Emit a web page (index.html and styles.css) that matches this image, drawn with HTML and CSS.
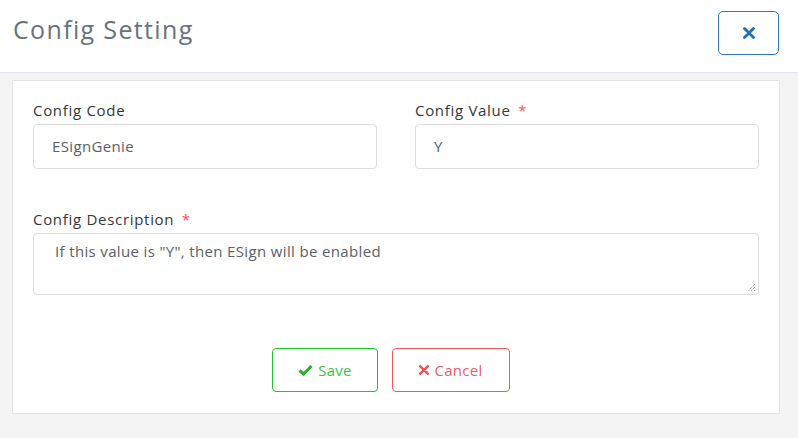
FILE: index.html
```html
<!DOCTYPE html>
<html>
<head>
<meta charset="utf-8">
<link rel="stylesheet" href="styles.css">
</head>
<body>
<div class="modal">
  <header class="modal-header">
    <h1 class="title">Config Setting</h1>
    <button class="close-btn" type="button" aria-label="Close">
      <svg width="12" height="12" viewBox="0 0 12 12"><path d="M1.5 1.5 L10.5 10.5 M10.5 1.5 L1.5 10.5" stroke="#1d6fb0" stroke-width="2.8" stroke-linecap="round" fill="none"/></svg>
    </button>
  </header>
  <div class="modal-body">
    <div class="card">
      <div class="row two">
        <div class="field">
          <label class="label">Config Code</label>
          <div class="input">ESignGenie</div>
        </div>
        <div class="field">
          <label class="label">Config Value <span class="req">*</span></label>
          <div class="input">Y</div>
        </div>
      </div>
      <div class="row">
        <div class="field">
          <label class="label">Config Description <span class="req">*</span></label>
          <div class="textarea">If this value is "Y", then ESign will be enabled
            <svg class="grip" width="10" height="10" viewBox="0 0 10 10"><path d="M9 2 L2 9 M9 5 L5 9 M9 8 L8 9" stroke="#777" stroke-width="1" fill="none" stroke-dasharray="1 1"/></svg>
          </div>
        </div>
      </div>
      <div class="actions">
        <button class="btn save" type="button">
          <svg width="15" height="12" viewBox="0 0 15 12"><path d="M1.5 6.5 L5.5 10 L13.5 2" stroke="#22b52c" stroke-width="3" fill="none" stroke-linejoin="miter"/></svg>
          Save
        </button>
        <button class="btn cancel" type="button">
          <svg width="10" height="10" viewBox="0 0 10 10"><path d="M1.3 1.3 L8.7 8.7 M8.7 1.3 L1.3 8.7" stroke="#ef5555" stroke-width="2.6" stroke-linecap="round" fill="none"/></svg>
          Cancel
        </button>
      </div>
    </div>
  </div>
</div>
</body>
</html>
```

FILE: styles.css
```css
* { box-sizing: border-box; }
html, body { margin: 0; padding: 0; }
body {
  width: 798px;
  height: 438px;
  overflow: hidden;
  background: #f4f4f4;
  font-family: "Open Sans", "Liberation Sans", sans-serif;
}
.modal { display: flex; flex-direction: column; height: 438px; }
.modal-header {
  height: 73px;
  background: #fff;
  border-bottom: 1px solid #dfe4ea;
  display: flex;
  align-items: flex-start;
  justify-content: space-between;
  padding: 11px 19px 0 13px;
}
.title {
  margin: 0;
  padding-top: 1px;
  font-size: 25px;
  font-weight: 400;
  color: #667380;
  letter-spacing: 1.35px;
}
.close-btn {
  width: 61px;
  height: 44px;
  border: 1px solid #2b7bbd;
  border-radius: 5px;
  background: #fff;
  display: flex;
  align-items: center;
  justify-content: center;
  padding: 0;
}
.modal-body { padding: 7px 18px 0 12px; }
.card {
  background: #fff;
  border: 1px solid #e3e3e3;
  height: 334px;
  padding: 19px 20px 0 20px;
  display: flex;
  flex-direction: column;
}
.row { display: flex; }
.row.two { gap: 38px; }
.row.two .field { width: 344px; }
.row + .row { margin-top: 40px; }
.field { display: flex; flex-direction: column; flex: 1; }
.label {
  font-size: 15px;
  letter-spacing: 0.7px;
  color: #34383c;
  line-height: 20px;
  margin-bottom: 4px;
}
.req { color: #f0575a; margin-left: 3px; }
.input {
  height: 45px;
  border: 1px solid #dcdde2;
  border-radius: 4px;
  padding: 0 18px;
  display: flex;
  align-items: center;
  font-size: 15px;
  letter-spacing: 0.35px;
  color: #5a6168;
  padding-bottom: 2px;
}
.textarea {
  position: relative;
  height: 62px;
  border: 1px solid #dcdcdc;
  border-radius: 4px;
  padding: 7px 21px;
  font-size: 15px;
  letter-spacing: 0.35px;
  color: #5a6168;
  line-height: 20px;
}
.grip { position: absolute; right: 2px; bottom: 2px; }
.actions {
  display: flex;
  justify-content: center;
  gap: 14px;
  margin-top: 53px;
  padding-right: 10px;
}
.btn {
  height: 44px;
  border-radius: 4px;
  background: #fff;
  font-family: inherit;
  font-size: 15px;
  letter-spacing: 0.3px;
  display: flex;
  align-items: center;
  justify-content: center;
  gap: 5px;
  padding: 0;
}
.btn.save { width: 106px; border: 1px solid #23c12b; color: #3fbf47; }
.btn.cancel { width: 118px; border: 1px solid #f25a5a; color: #f06060; }
```
